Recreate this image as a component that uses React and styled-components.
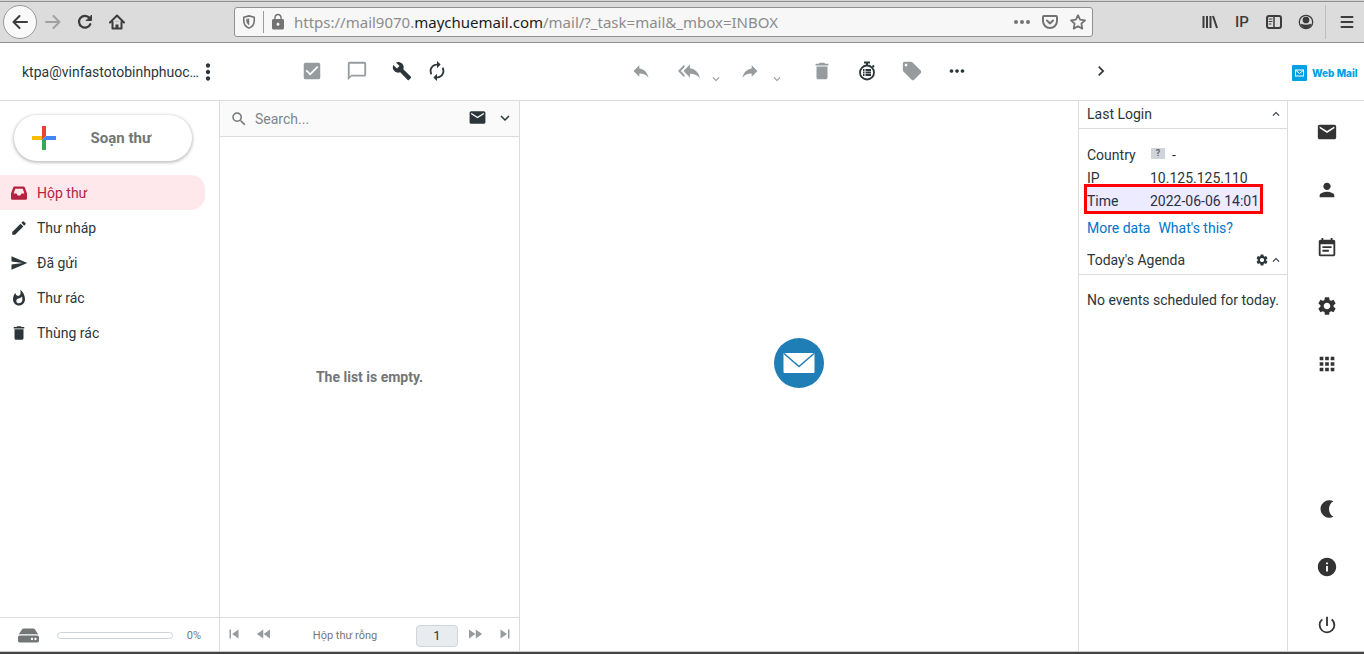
import React from "react";
import styled, { createGlobalStyle, css } from "styled-components";
import {
  MdApps,
  MdAutorenew,
  MdBuild,
  MdChatBubbleOutline,
  MdCheckBox,
  MdDelete,
  MdEdit,
  MdEmail,
  MdEventNote,
  MdFastForward,
  MdFastRewind,
  MdInfo,
  MdKeyboardArrowDown,
  MdKeyboardArrowRight,
  MdKeyboardArrowUp,
  MdLocalOffer,
  MdLock,
  MdMoreHoriz,
  MdMoreVert,
  MdPerson,
  MdPowerSettingsNew,
  MdReply,
  MdReplyAll,
  MdSearch,
  MdSend,
  MdSettings,
  MdSkipNext,
  MdSkipPrevious,
  MdWhatshot,
} from "react-icons/md";
import { FaHdd } from "react-icons/fa";

const colors = {
  text: "#2c363a",
  muted: "#737677",
  disabled: "#969b9e",
  line: "#dadcdd",
  link: "#0075c8",
  chrome: "#dcdcdc",
  chromeLine: "#919191",
  chromeIcon: "#3c3c3c",
  active: "#b3233f",
  activeBg: "#ffe8ec",
};

const columns = "220px 300px minmax(0, 1fr) 209px 77px";

const GlobalStyle = createGlobalStyle`
  * {
    box-sizing: border-box;
  }
  body {
    margin: 0;
    background: #fff;
    color: ${colors.text};
    font-family: Roboto, "Liberation Sans", sans-serif;
    font-size: 14px;
    line-height: 20px;
  }
  button, input {
    font: inherit;
    color: inherit;
  }
  svg {
    display: block;
    flex: none;
  }
`;

const Page = styled.div`
  display: flex;
  flex-direction: column;
  min-height: 100vh;
`;

/* browser chrome */

const TabEdge = styled.div`
  height: 2px;
  background: #d3d3d3;
  border-bottom: 1px solid ${colors.chromeLine};
`;

const BrowserBar = styled.div`
  display: flex;
  align-items: center;
  height: 41px;
  padding: 0 1px 0 3px;
  background: ${colors.chrome};
  border-bottom: 1px solid ${colors.chromeLine};
  color: ${colors.chromeIcon};
`;

const BrowserButton = styled.button`
  display: flex;
  align-items: center;
  justify-content: center;
  width: ${(props) => props.$width || 32}px;
  height: 34px;
  padding: 0;
  border: 0;
  background: none;
  color: ${(props) => (props.$disabled ? "#a0a0a0" : colors.chromeIcon)};
`;

const BackButton = styled(BrowserButton)`
  border: 1px solid #999;
  border-radius: 50%;
  background: #f9f9f9;
`;

const AddressBar = styled.div`
  display: flex;
  flex: 1;
  align-items: center;
  height: 30px;
  margin: 0 101px;
  padding: 0 6px 0 7px;
  border: 1px solid ${colors.chromeLine};
  border-radius: 3px;
  background: #f7f7f7;
  color: #737373;
`;

const AddressDivider = styled.span`
  width: 1px;
  height: 22px;
  margin: 0 5px 0 7px;
  background: #9a9a9a;
`;

const Address = styled.span`
  flex: 1;
  min-width: 0;
  margin-left: 7px;
  overflow: hidden;
  color: #8c8c8c;
  font-family: "Noto Sans", sans-serif;
  font-size: 15px;
  white-space: nowrap;

  b {
    color: #1c1c1c;
    font-weight: 400;
  }
`;

const AddressActions = styled.span`
  display: flex;
  align-items: center;
  gap: 12px;
`;

const Extension = styled.span`
  font-family: Roboto, sans-serif;
  font-size: 15px;
  font-weight: 500;
`;

const MenuDivider = styled.span`
  width: 1px;
  height: 34px;
  margin: 0 5px 0 3px;
  background: #bdbdbd;
`;

/* mail header */

const Header = styled.header`
  display: grid;
  grid-template-columns: ${columns};
  align-items: center;
  height: 58px;
  border-bottom: 1px solid ${colors.line};
`;

const Account = styled.div`
  display: flex;
  align-items: center;
  gap: 1px;
  padding-left: 22px;
`;

const AccountName = styled.span`
  width: 177px;
  white-space: nowrap;
`;

const IconButton = styled.button`
  display: flex;
  flex: none;
  align-items: center;
  justify-content: center;
  width: ${(props) => props.$width || 20}px;
  height: 20px;
  padding: 0;
  border: 0;
  background: none;
  color: ${(props) => (props.$disabled ? colors.disabled : colors.text)};
  cursor: ${(props) => (props.$disabled ? "default" : "pointer")};
`;

const ListTools = styled.div`
  display: flex;
  gap: 25px;
  padding: 0 0 2px 82px;
`;

const MessageTools = styled.div`
  display: flex;
  align-items: center;
  justify-content: center;
  gap: 25px;
  padding-bottom: 2px;
`;

const ToolGroup = styled.div`
  display: flex;
  align-items: center;
  gap: ${(props) => props.$gap}px;
`;

const AnswerTools = styled(ToolGroup)`
  padding: 0 4px 0 3px;
`;

const DropArrow = styled(MdKeyboardArrowDown)`
  margin-top: 16px;
`;

const Flipped = styled(MdReply)`
  transform: scaleX(-1);
`;

const NextTool = styled.div`
  padding: 0 0 2px 13px;
`;

const Brand = styled.a`
  display: flex;
  align-items: center;
  gap: 5px;
  padding: 2px 0 0 5px;
  color: #00a0e3;
  font-family: Inter, sans-serif;
  font-size: 10px;
  font-weight: 800;
  line-height: 16px;
  text-decoration: none;
  white-space: nowrap;
`;

/* main area */

const Body = styled.div`
  display: grid;
  flex: 1;
  grid-template-columns: ${columns};
`;

const Column = styled.div`
  display: flex;
  flex-direction: column;
  min-width: 0;
  border-right: 1px solid ${colors.line};
`;

const ComposeButton = styled.button`
  display: flex;
  align-items: center;
  justify-content: space-between;
  width: 178px;
  height: 46px;
  margin: 14px 0 14px 14px;
  padding: 0 41px 0 18px;
  border: 0;
  border-radius: 24px;
  background: #fff;
  box-shadow: 0 1px 3px 1px rgba(60, 64, 67, 0.3);
  color: ${colors.muted};
  font-size: 15px;
  font-weight: 700;
`;

const Folders = styled.nav`
  flex: 1;
`;

const Folder = styled.a`
  display: flex;
  align-items: center;
  gap: 9px;
  height: 35px;
  margin-right: 14px;
  padding-left: 10px;
  border-radius: 0 14px 14px 0;
  color: ${colors.text};
  text-decoration: none;
  ${(props) =>
    props.$active &&
    css`
      background: ${colors.activeBg};
      color: ${colors.active};
    `}
`;

const Footer = styled.footer`
  display: flex;
  align-items: center;
  height: 34px;
  padding-top: 2px;
  border-top: 1px solid ${colors.line};
  color: ${colors.muted};
  font-size: 11px;
`;

const QuotaFooter = styled(Footer)`
  gap: 14px;
  padding-right: 18px;
  padding-left: 18px;
`;

const QuotaBar = styled.div`
  flex: 1;
  height: 7px;
  margin-left: 4px;
  border: 1px solid #ced4da;
  border-radius: 4px;
`;

const PagerFooter = styled(Footer)`
  justify-content: space-between;
  padding-right: 4px;
  padding-left: 4px;
`;

const PagerButtons = styled.div`
  display: flex;
  gap: 10px;
  padding-bottom: 4px;
`;

const PageInput = styled.input`
  width: 42px;
  height: 22px;
  padding: 0;
  border: 1px solid #ced4da;
  border-radius: 4px;
  background: #e9ecef;
  color: ${colors.text};
  font-size: 13px;
  text-align: center;
`;

const SearchBar = styled.div`
  display: flex;
  align-items: center;
  height: 36px;
  padding-left: 10px;
  border-bottom: 1px solid ${colors.line};
  background: #fafafa;
  color: ${colors.muted};
`;

const SearchInput = styled.input`
  flex: 1;
  min-width: 0;
  margin-left: 7px;
  padding: 0;
  border: 0;
  outline: none;
  background: none;

  &::placeholder {
    color: #808588;
    opacity: 1;
  }
`;

const SearchTools = styled.div`
  display: flex;
  padding-bottom: 2px;
`;

const EmptyList = styled.div`
  display: flex;
  flex: 1;
  align-items: center;
  justify-content: center;
  color: ${colors.muted};
  font-weight: 700;
`;

const Preview = styled.main`
  display: flex;
  align-items: center;
  justify-content: center;
  padding-bottom: 26px;
`;

const Aside = styled.aside`
  border-left: 1px solid ${colors.line};
`;

const BoxTitle = styled.h2`
  display: flex;
  align-items: center;
  height: 28px;
  margin: 0;
  padding: 0 4px 2px 8px;
  border-bottom: 1px solid ${colors.line};
  font-size: 14px;
  font-weight: 400;

  span {
    flex: 1;
  }
`;

const BoxBody = styled.div`
  padding: ${(props) => props.$top}px 0 0 8px;
  white-space: nowrap;
`;

const LoginData = styled.div`
  position: relative;
`;

const LoginTable = styled.table`
  border-collapse: collapse;

  th, td {
    height: 23px;
    padding: 0;
    font-weight: 400;
    text-align: left;
  }
  th {
    width: 63px;
  }
`;

const Mark = styled.div`
  position: absolute;
  right: 24px;
  bottom: -2px;
  left: -3px;
  height: 30px;
  border: 3px solid #f00;
  background: rgba(10, 0, 255, 0.08);
`;

const Flag = styled.span`
  display: inline-block;
  width: 14px;
  height: 11px;
  margin: 0 7px 0 1px;
  background: #ced4da;
  color: #666;
  font-size: 9px;
  font-weight: 700;
  line-height: 11px;
  text-align: center;
  vertical-align: 4px;
`;

const Links = styled.p`
  display: flex;
  gap: 8px;
  margin: 6px 0 9px;

  a {
    color: ${colors.link};
    text-decoration: none;
  }
`;

const Rail = styled.nav`
  display: flex;
  flex-direction: column;
  align-items: center;
  gap: 8px;
  padding: 6px 0 1px 1px;
  border-left: 1px solid ${colors.line};
`;

const RailLink = styled.a`
  display: flex;
  align-items: center;
  justify-content: center;
  width: 50px;
  height: 50px;
  color: #333;
`;

const RailSpace = styled.div`
  flex: 1;
`;

const WindowEdge = styled.div`
  height: 3px;
  border-top: 1px solid #c8c8c8;
  background: #444;
`;

const Line = ({ size = 16, width = 2, children }) => (
  <svg
    width={size}
    height={size}
    viewBox="0 0 16 16"
    fill="none"
    stroke="currentColor"
    strokeWidth={width}
    strokeLinecap="round"
    strokeLinejoin="round"
  >
    {children}
  </svg>
);

const ArrowLeft = () => (
  <Line>
    <path d="M15 8H1.500M7.500 2 1.500 8l6 6" />
  </Line>
);

const ArrowRight = () => (
  <Line>
    <path d="M1 8h13.500M8.500 2l6 6-6 6" />
  </Line>
);

const Reload = () => (
  <Line width={2.2}>
    <path d="M13.300 10.200A5.900 5.900 0 1 1 12.500 4" />
    <path d="M14.500 1.500v5h-5z" fill="currentColor" strokeWidth="1" />
  </Line>
);

const Home = () => (
  <Line>
    <path d="M1 8.500 8 1.500l7 7M3.500 8v6.500h9V8" />
    <path d="M8 14v-3.500M8 7v.2" strokeWidth="3" strokeLinecap="butt" />
  </Line>
);

const Shield = () => (
  <Line size={14} width={1.8}>
    <path d="M8 1 14 2.500v4c0 4-2.500 7-6 8.500-3.500-1.500-6-4.500-6-8.500v-4z" />
    <path d="M8 4.500v7C6 10 5 8.500 5 5.200z" fill="currentColor" strokeWidth=".5" />
  </Line>
);

const PageDots = () => (
  <svg width="16" height="16" viewBox="0 0 16 16" fill="currentColor">
    <circle cx="2" cy="8" r="2" />
    <circle cx="8" cy="8" r="2" />
    <circle cx="14" cy="8" r="2" />
  </svg>
);

const Pocket = () => (
  <Line>
    <path d="M2 2h12q1 0 1 1v4a7 7 0 0 1-14 0V3q0-1 1-1zM5 6.500l3 3 3-3" />
  </Line>
);

const Star = () => (
  <Line width={1.8}>
    <path d="m8 1.200 2.100 4.500 4.900.6-3.600 3.400.9 4.900L8 12.200l-4.300 2.400.9-4.900L1 6.300l4.900-.6z" />
  </Line>
);

const Library = () => (
  <Line>
    <path d="M1.500 2v12M5 2v12M8.500 2v12M11 2l4 12" strokeLinecap="butt" />
  </Line>
);

const SidebarIcon = () => (
  <Line>
    <rect x="1" y="2" width="14" height="12" rx="2" />
    <path d="M8 2v12" strokeWidth="1.500" />
    <path d="M3 5h3M3 7.500h3M3 10h2" strokeWidth="1" />
  </Line>
);

const Profile = () => (
  <Line width={1.3}>
    <circle cx="8" cy="8" r="6.700" />
    <circle cx="8" cy="6" r="2.700" fill="currentColor" />
    <path d="M3.500 10.500c2 1.200 7 1.200 9 0-.8 2-2.500 3-4.500 3s-3.700-1-4.500-3z" fill="currentColor" />
  </Line>
);

const Burger = () => (
  <Line>
    <path d="M2.500 3h11M2.500 8h11M2.500 13h11" />
  </Line>
);

const Snooze = () => (
  <svg width="18" height="20" viewBox="0 0 18 20" fill="none" stroke="currentColor">
    <circle cx="9" cy="11.500" r="7" strokeWidth="1.800" />
    <path d="M6 1.500h6M9 2v2.500M14.500 4.500l1.500 1.500" strokeWidth="2" />
    <path d="M5 9h1.500M7.500 9H13M5 11.500h1.500M7.500 11.500H13M5 14h1.500M7.500 14H13" strokeWidth="1.800" />
  </svg>
);

const Inbox = ({ size }) => (
  <svg width={size} height={size} viewBox="0 0 18 18" fill="currentColor" fillRule="evenodd">
    <path d="M4.500 2.500h9q.8 0 1.200.8L17 9.500v5q0 1.300-1.300 1.300H2.300Q1 15.800 1 14.500v-5l2.300-6.200q.4-.8 1.200-.8zM5.200 4.800 3.600 9.500h2.900l1.200 2h2.600l1.200-2h2.900l-1.600-4.700z" />
  </svg>
);

const Moon = () => (
  <svg width="20" height="20" viewBox="0 0 20 20" fill="currentColor">
    <path d="M16.500 2.200A8.800 8.800 0 1 0 16.500 17.700C10.500 15 10.500 5 16.500 2.200z" />
  </svg>
);

const PlusMark = () => (
  <svg width="24" height="24" viewBox="0 0 24 24">
    <path d="M10 0h4v10l-4 4z" fill="#ea4335" />
    <path d="M0 10h10v4H0z" fill="#fbbc04" />
    <path d="M10 14h4v10h-4z" fill="#34a853" />
    <path d="M14 10h10v4H10z" fill="#4285f4" />
  </svg>
);

const BrandMark = () => (
  <svg width="15" height="16" viewBox="0 0 15 16">
    <rect width="15" height="16" rx="1" fill="#00a0e3" />
    <rect x="3.500" y="5" width="8" height="6" fill="none" stroke="#fff" />
    <path d="m4 5.500 3.500 3 3.500-3" fill="none" stroke="#fff" />
  </svg>
);

const Watermark = () => (
  <svg width="50" height="50" viewBox="0 0 50 50">
    <circle cx="25" cy="25" r="25" fill="#207eb7" />
    <rect x="9.500" y="15" width="31" height="20" rx="1" fill="#fff" />
    <path d="m10 15.500 15 13 15-13" fill="none" stroke="#207eb7" strokeWidth="1.500" />
  </svg>
);

const folders = [
  { name: "Hộp thư", Icon: Inbox, active: true },
  { name: "Thư nháp", Icon: MdEdit },
  { name: "Đã gửi", Icon: MdSend },
  { name: "Thư rác", Icon: MdWhatshot },
  { name: "Thùng rác", Icon: MdDelete },
];

const tasks = [
  { name: "Mail", Icon: MdEmail },
  { name: "Contacts", Icon: MdPerson },
  { name: "Calendar", Icon: MdEventNote },
  { name: "Settings", Icon: MdSettings },
  { name: "Apps", Icon: MdApps },
];

const extras = [
  { name: "Dark mode", Icon: Moon },
  { name: "About", Icon: MdInfo },
  { name: "Logout", Icon: MdPowerSettingsNew },
];

const Browser = () => (
  <>
    <TabEdge />
    <BrowserBar>
      <BackButton aria-label="Back" $width={34}>
        <ArrowLeft />
      </BackButton>
      <BrowserButton aria-label="Forward" $disabled>
        <ArrowRight />
      </BrowserButton>
      <BrowserButton aria-label="Reload">
        <Reload />
      </BrowserButton>
      <BrowserButton aria-label="Home">
        <Home />
      </BrowserButton>
      <AddressBar>
        <Shield />
        <AddressDivider />
        <MdLock size={18} />
        <Address>
          https://mail9070.<b>maychuemail.com</b>/mail/?_task=mail&_mbox=INBOX
        </Address>
        <AddressActions>
          <PageDots />
          <Pocket />
          <Star />
        </AddressActions>
      </AddressBar>
      <BrowserButton aria-label="Library">
        <Library />
      </BrowserButton>
      <BrowserButton aria-label="IP extension">
        <Extension>IP</Extension>
      </BrowserButton>
      <BrowserButton aria-label="Sidebars">
        <SidebarIcon />
      </BrowserButton>
      <BrowserButton aria-label="Profile">
        <Profile />
      </BrowserButton>
      <MenuDivider />
      <BrowserButton aria-label="Open menu">
        <Burger />
      </BrowserButton>
    </BrowserBar>
  </>
);

const MailHeader = () => (
  <Header>
    <Account>
      <AccountName>ktpa@vinfastotobinhphuoc…</AccountName>
      <IconButton aria-label="Account menu" $width={16}>
        <MdMoreVert size={26} />
      </IconButton>
    </Account>
    <ListTools>
      <IconButton aria-label="Select" $disabled>
        <MdCheckBox size={22} />
      </IconButton>
      <IconButton aria-label="Threads" $disabled>
        <MdChatBubbleOutline size={22} />
      </IconButton>
      <ToolGroup $gap={15}>
        <IconButton aria-label="Options">
          <MdBuild size={20} />
        </IconButton>
        <IconButton aria-label="Refresh">
          <MdAutorenew size={22} />
        </IconButton>
      </ToolGroup>
    </ListTools>
    <MessageTools>
      <IconButton aria-label="Reply" $disabled>
        <MdReply size={20} />
      </IconButton>
      <AnswerTools $gap={18}>
        <ToolGroup $gap={11}>
          <IconButton aria-label="Reply all" $disabled>
            <MdReplyAll size={22} />
          </IconButton>
          <IconButton aria-label="Reply all options" $disabled $width={12}>
            <DropArrow size={14} />
          </IconButton>
        </ToolGroup>
        <ToolGroup $gap={11}>
          <IconButton aria-label="Forward" $disabled>
            <Flipped size={20} />
          </IconButton>
          <IconButton aria-label="Forward options" $disabled $width={12}>
            <DropArrow size={14} />
          </IconButton>
        </ToolGroup>
      </AnswerTools>
      <IconButton aria-label="Delete" $disabled>
        <MdDelete size={22} />
      </IconButton>
      <IconButton aria-label="Snooze">
        <Snooze />
      </IconButton>
      <IconButton aria-label="Mark" $disabled>
        <MdLocalOffer size={22} />
      </IconButton>
      <IconButton aria-label="More">
        <MdMoreHoriz size={22} />
      </IconButton>
    </MessageTools>
    <NextTool>
      <IconButton aria-label="Show panel">
        <MdKeyboardArrowRight size={20} />
      </IconButton>
    </NextTool>
    <Brand href="#">
      <BrandMark />
      Web Mail
    </Brand>
  </Header>
);

const Sidebar = () => (
  <Column>
    <ComposeButton>
      <PlusMark />
      Soạn thư
    </ComposeButton>
    <Folders>
      {folders.map(({ name, Icon, active }) => (
        <Folder key={name} href="#" $active={active}>
          <Icon size={18} />
          {name}
        </Folder>
      ))}
    </Folders>
    <QuotaFooter>
      <FaHdd size={21} />
      <QuotaBar />
      <span>0%</span>
    </QuotaFooter>
  </Column>
);

const MessageList = () => (
  <Column>
    <SearchBar>
      <MdSearch size={18} />
      <SearchInput type="text" placeholder="Search..." aria-label="Search" />
      <SearchTools>
        <IconButton aria-label="Search scope" $width={28}>
          <MdEmail size={19} />
        </IconButton>
        <IconButton aria-label="Search options" $width={28}>
          <MdKeyboardArrowDown size={18} />
        </IconButton>
      </SearchTools>
    </SearchBar>
    <EmptyList>The list is empty.</EmptyList>
    <PagerFooter>
      <PagerButtons>
        <IconButton aria-label="First page" $disabled>
          <MdSkipPrevious size={18} />
        </IconButton>
        <IconButton aria-label="Previous page" $disabled>
          <MdFastRewind size={18} />
        </IconButton>
      </PagerButtons>
      <span>Hộp thư rỗng</span>
      <ToolGroup $gap={7}>
        <PageInput type="text" defaultValue="1" aria-label="Page" />
        <PagerButtons>
          <IconButton aria-label="Next page" $disabled>
            <MdFastForward size={18} />
          </IconButton>
          <IconButton aria-label="Last page" $disabled>
            <MdSkipNext size={18} />
          </IconButton>
        </PagerButtons>
      </ToolGroup>
    </PagerFooter>
  </Column>
);

const InfoPanel = () => (
  <Aside>
    <BoxTitle>
      <span>Last Login</span>
      <IconButton aria-label="Collapse last login" $width={14}>
        <MdKeyboardArrowUp size={14} />
      </IconButton>
    </BoxTitle>
    <BoxBody $top={14}>
      <LoginData>
        <LoginTable>
          <tbody>
            <tr>
              <th>Country</th>
              <td>
                <Flag>?</Flag>-
              </td>
            </tr>
            <tr>
              <th>IP</th>
              <td>10.125.125.110</td>
            </tr>
            <tr>
              <th>Time</th>
              <td>2022-06-06 14:01</td>
            </tr>
          </tbody>
        </LoginTable>
        <Mark />
      </LoginData>
      <Links>
        <a href="#">More data</a>
        <a href="#">What's this?</a>
      </Links>
    </BoxBody>
    <BoxTitle>
      <span>Today's Agenda</span>
      <IconButton aria-label="Agenda settings" $width={14}>
        <MdSettings size={14} />
      </IconButton>
      <IconButton aria-label="Collapse agenda" $width={14}>
        <MdKeyboardArrowUp size={14} />
      </IconButton>
    </BoxTitle>
    <BoxBody $top={15}>No events scheduled for today.</BoxBody>
  </Aside>
);

const TaskRail = () => (
  <Rail>
    {tasks.map(({ name, Icon }) => (
      <RailLink key={name} href="#" aria-label={name}>
        <Icon size={22} />
      </RailLink>
    ))}
    <RailSpace />
    {extras.map(({ name, Icon }) => (
      <RailLink key={name} href="#" aria-label={name}>
        <Icon size={22} />
      </RailLink>
    ))}
  </Rail>
);

const App = () => (
  <Page>
    <GlobalStyle />
    <Browser />
    <MailHeader />
    <Body>
      <Sidebar />
      <MessageList />
      <Preview>
        <Watermark />
      </Preview>
      <InfoPanel />
      <TaskRail />
    </Body>
    <WindowEdge />
  </Page>
);

export default App;
